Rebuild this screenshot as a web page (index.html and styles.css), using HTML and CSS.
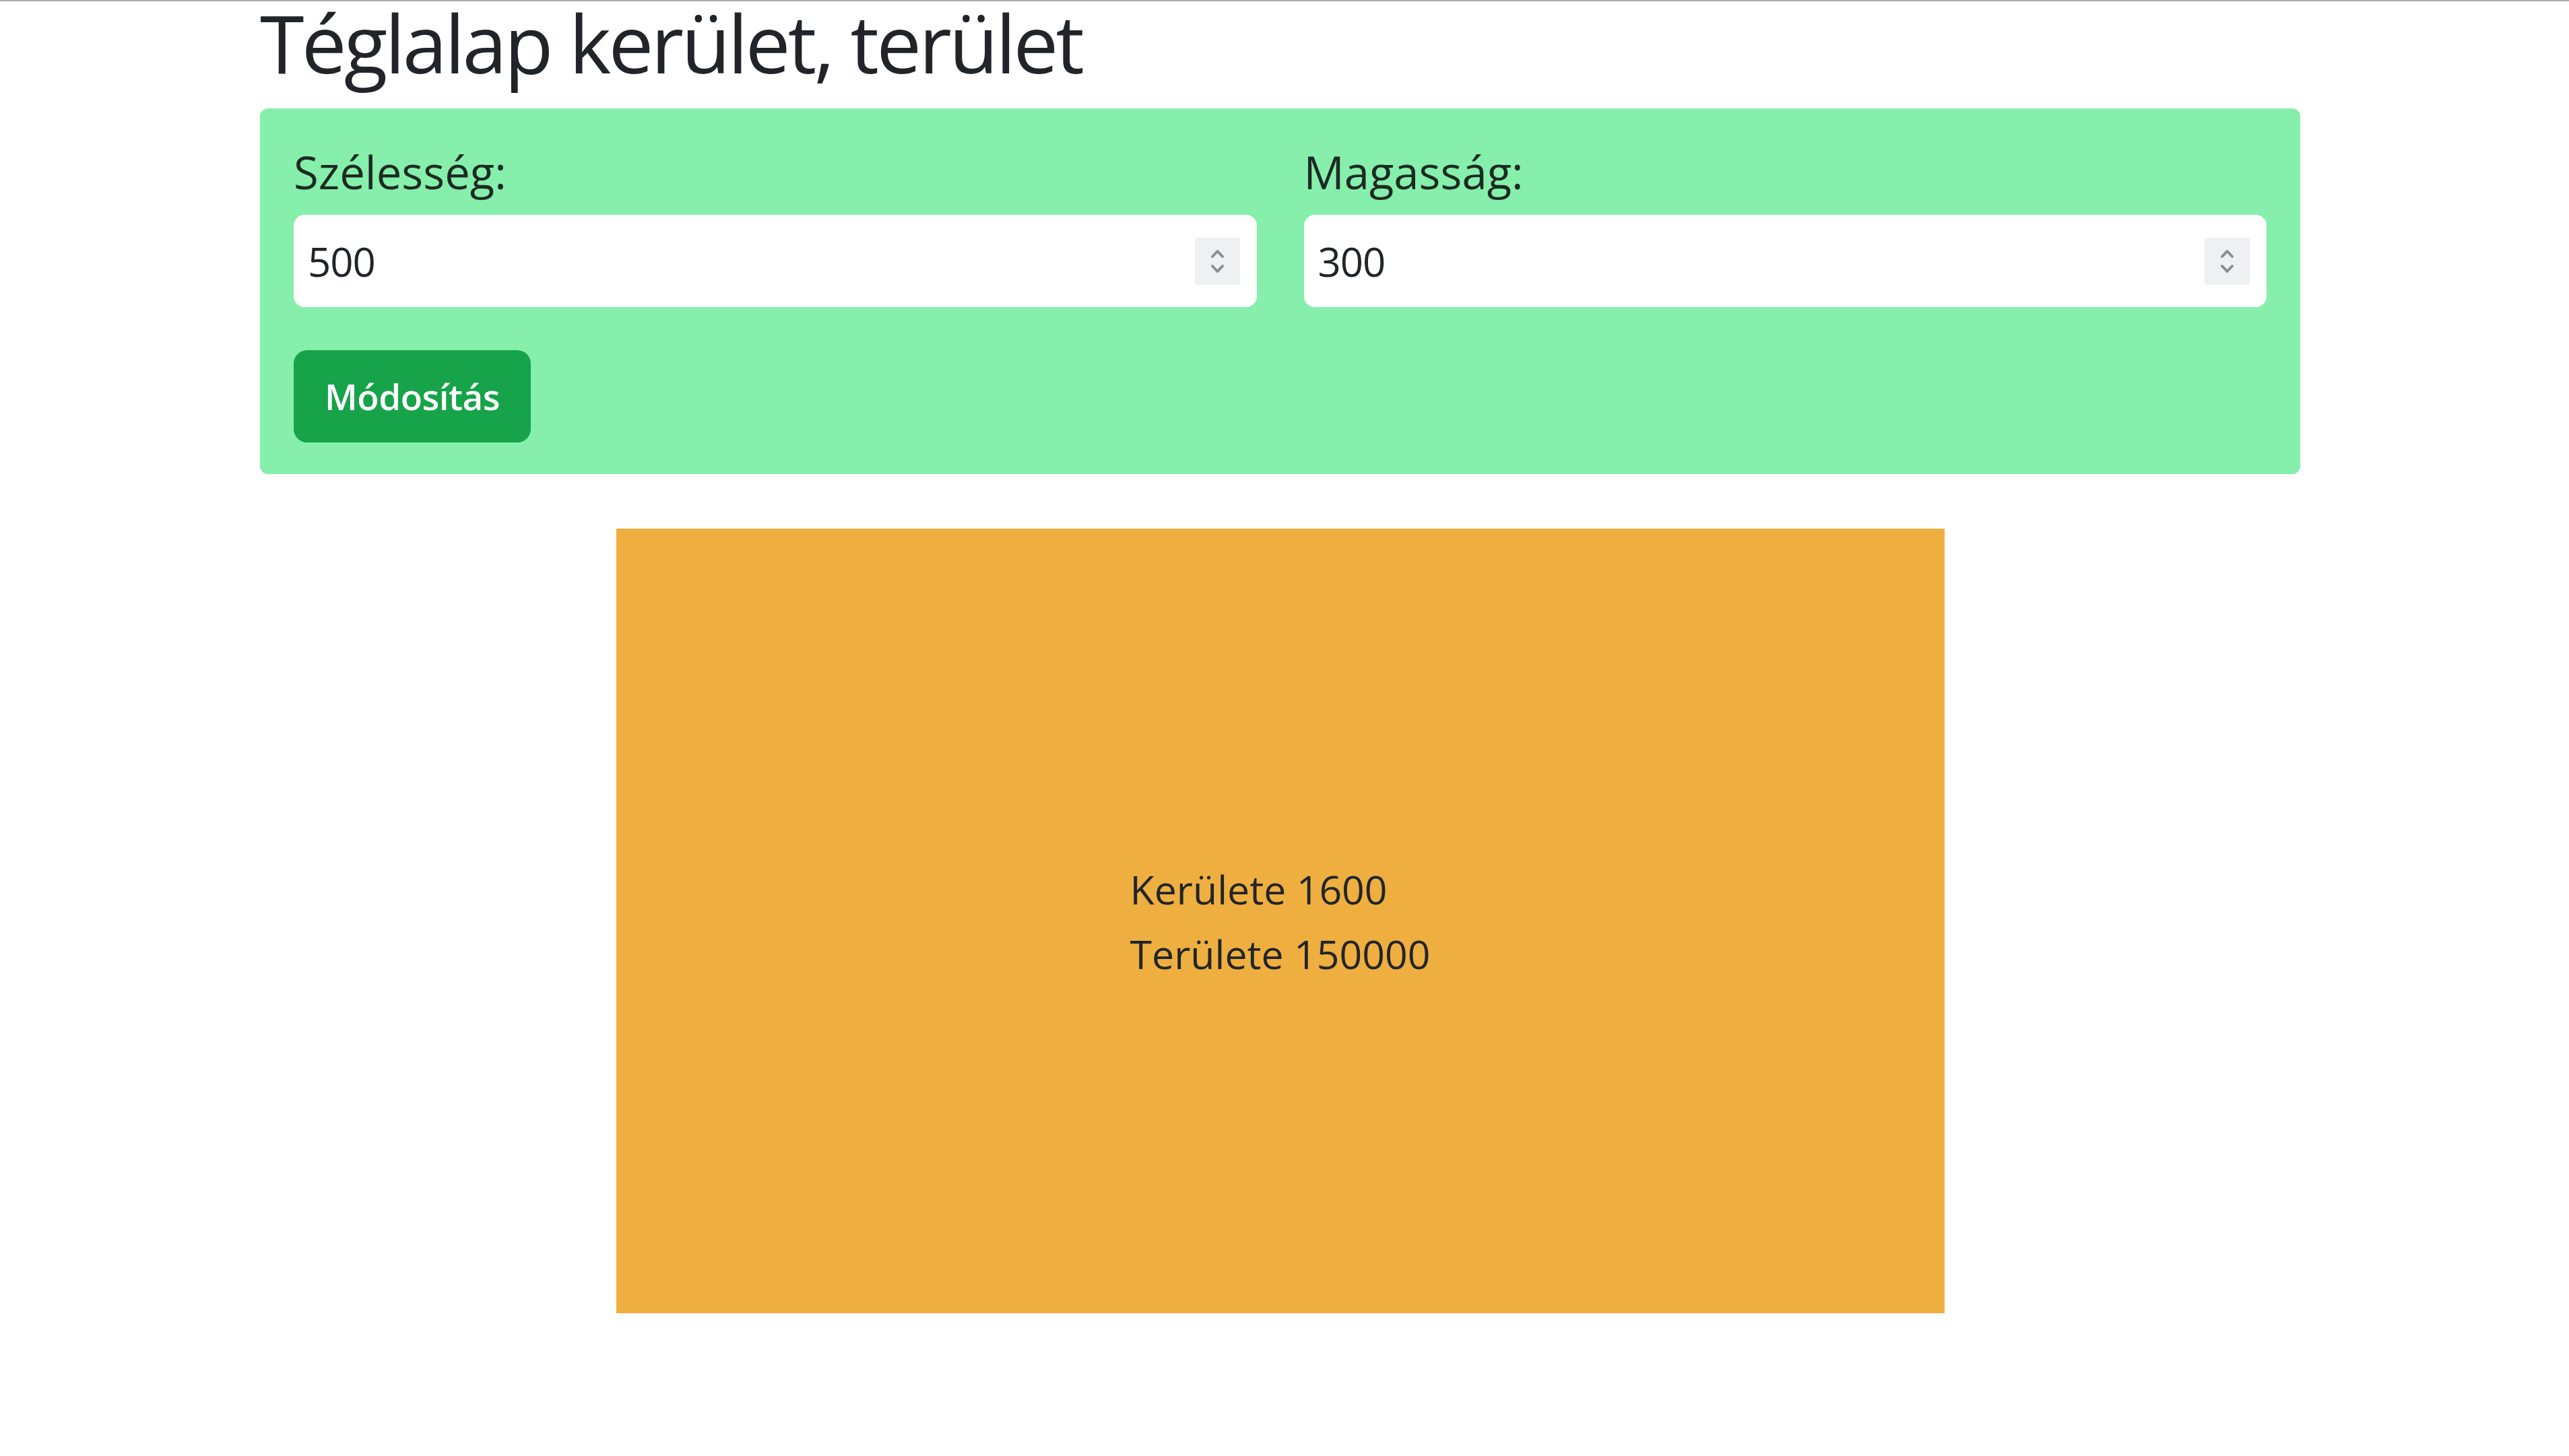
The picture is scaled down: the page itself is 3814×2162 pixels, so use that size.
FILE: index.html
```html
<!DOCTYPE html>
<html lang="hu">
<head>
<meta charset="utf-8">
<title>Téglalap kerület, terület</title>
<link rel="stylesheet" href="styles.css">
</head>
<body>
<div class="container">
  <h1 class="title">Téglalap kerület, terület</h1>
  <form class="panel">
    <div class="fields">
      <div class="field">
        <label class="label" for="w">Szélesség:</label>
        <div class="input-box">
          <input class="input" id="w" type="number" value="500">
          <svg class="spin" width="67" height="70" viewBox="0 0 67 70">
            <rect x="0" y="0" width="67" height="70" rx="4" fill="#eef0f3"/>
            <path d="M26 28 L33.5 20 L41 28" fill="none" stroke="#8a8d93" stroke-width="4" stroke-linecap="round" stroke-linejoin="round"/>
            <path d="M26 42 L33.5 50 L41 42" fill="none" stroke="#8a8d93" stroke-width="4" stroke-linecap="round" stroke-linejoin="round"/>
          </svg>
        </div>
      </div>
      <div class="field">
        <label class="label" for="h">Magasság:</label>
        <div class="input-box">
          <input class="input" id="h" type="number" value="300">
          <svg class="spin" width="67" height="70" viewBox="0 0 67 70">
            <rect x="0" y="0" width="67" height="70" rx="4" fill="#eef0f3"/>
            <path d="M26 28 L33.5 20 L41 28" fill="none" stroke="#8a8d93" stroke-width="4" stroke-linecap="round" stroke-linejoin="round"/>
            <path d="M26 42 L33.5 50 L41 42" fill="none" stroke="#8a8d93" stroke-width="4" stroke-linecap="round" stroke-linejoin="round"/>
          </svg>
        </div>
      </div>
    </div>
    <button class="btn" type="button">Módosítás</button>
  </form>
  <div class="stage">
    <div class="rect">
      <div class="info">
        <div class="line">Kerülete 1600</div>
        <div class="line">Területe 150000</div>
      </div>
    </div>
  </div>
</div>
</body>
</html>
```

FILE: styles.css
```css
* { box-sizing: border-box; }

html, body {
  margin: 0;
  background: #ffffff;
}

body {
  border-top: 2px solid #a9a9a9;
  padding-right: 13px;
  font-family: "Open Sans", "Noto Sans", sans-serif;
  color: #212529;
}

.container {
  width: 3029px;
  margin: 0 auto;
}

.title {
  margin: 0 0 40px 0;
  padding-top: 4px;
  font-size: 119px;
  line-height: 115px;
  letter-spacing: -3.8px;
  font-weight: 400;
  color: #212529;
}

.panel {
  background: #86efac;
  border-radius: 12px;
  padding: 56px 50px 47px 50px;
  margin: 0;
}

.fields {
  display: grid;
  grid-template-columns: 1fr 1fr;
  column-gap: 70px;
}

.field {
  display: flex;
  flex-direction: column;
}

.label {
  font-size: 67px;
  line-height: 77px;
  margin-bottom: 25px;
  color: #1c2b22;
}

.input-box {
  height: 137px;
  background: #ffffff;
  border-radius: 16px;
  display: flex;
  align-items: center;
  padding: 0 25px 0 21px;
}

.input {
  flex: 1;
  min-width: 0;
  border: none;
  outline: none;
  background: transparent;
  font-family: "Open Sans", "Noto Sans", sans-serif;
  font-size: 60px;
  letter-spacing: -1px;
  color: #212529;
  padding: 0;
  -moz-appearance: textfield;
  appearance: textfield;
}

.input::-webkit-inner-spin-button,
.input::-webkit-outer-spin-button {
  -webkit-appearance: none;
  margin: 0;
}

.spin {
  display: block;
  flex: none;
}

.btn {
  margin-top: 64px;
  height: 137px;
  padding: 0 46px;
  border: none;
  border-radius: 20px;
  background: #16a34a;
  color: #ffffff;
  font-family: "Open Sans", "Noto Sans", sans-serif;
  font-size: 53px;
  font-weight: 600;
  letter-spacing: -0.5px;
  display: block;
}

.stage {
  display: flex;
  justify-content: center;
  margin-top: 81px;
}

.rect {
  width: 1972px;
  height: 1165px;
  background: #eeaf40;
  display: flex;
  align-items: center;
  justify-content: center;
}

.info {
  font-size: 59px;
  line-height: 96px;
  color: #212529;
}
```
